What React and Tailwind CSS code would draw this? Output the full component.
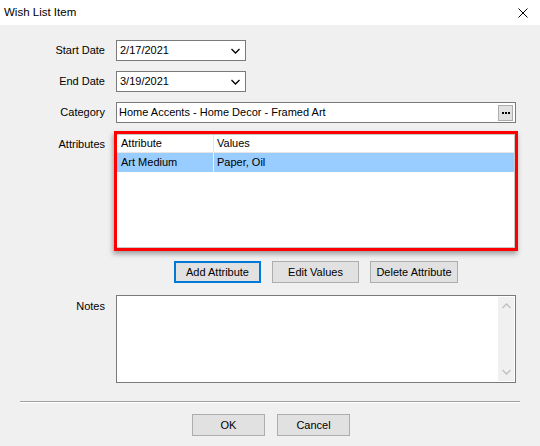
import React from 'react';

const font = { fontFamily: '"Liberation Sans", Arial, sans-serif' };

const Chevron = ({ up, className }) => (
  <svg width="9" height="6" viewBox="0 0 9 6" className={className}>
    <path d={up ? 'M0.5 5 L4.5 1 L8.5 5' : 'M0.5 1 L4.5 5 L8.5 1'} fill="none" stroke="currentColor" strokeWidth="1.3" />
  </svg>
);

const DateField = ({ value }) => (
  <div className="w-[130px] h-[21px] bg-white border border-[#7a7a7a] flex items-center justify-between pl-[3px] pr-[5px]">
    <span>{value}</span>
    <Chevron className="text-black" />
  </div>
);

const Btn = ({ children, focused, w }) => (
  <div
    className={`h-[22px] flex items-center justify-center whitespace-nowrap bg-[#e1e1e1] ${w} ${
      focused ? 'border-2 border-[#0078d7]' : 'border border-[#adadad]'
    }`}
  >
    {children}
  </div>
);

export default function App() {
  return (
    <div className="w-[540px] h-[446px] bg-[#f0f0f0] text-[11px] text-black leading-none overflow-hidden" style={font}>
      {/* title bar */}
      <div className="h-[25px] bg-white flex items-center justify-between pl-[4px] pr-[12px]">
        <span className="text-[11.5px]">Wish List Item</span>
        <svg width="10" height="10" viewBox="0 0 10 10">
          <path d="M0.5 0.5 L9.5 9.5 M9.5 0.5 L0.5 9.5" stroke="#000" strokeWidth="1" />
        </svg>
      </div>

      <div className="grid grid-cols-[105px_1fr] gap-x-[11px] pt-[15px]">
        <div className="h-[21px] flex items-center justify-end">Start Date</div>
        <DateField value="2/17/2021" />

        <div className="h-[21px] mt-[10px] flex items-center justify-end">End Date</div>
        <div className="mt-[10px]">
          <DateField value="3/19/2021" />
        </div>

        <div className="h-[21px] mt-[10px] flex items-center justify-end">Category</div>
        <div className="mt-[10px] w-[400px] h-[21px] bg-white border border-[#7a7a7a] flex items-center justify-between pl-[2px] pr-[2px]">
          <span>Home Accents - Home Decor - Framed Art</span>
          <div className="w-[15px] h-[16px] bg-[#e1e1e1] border border-[#adadad] flex items-center justify-center gap-[1px]">
            <span className="w-[2px] h-[2px] bg-black" />
            <span className="w-[2px] h-[2px] bg-black" />
            <span className="w-[2px] h-[2px] bg-black" />
          </div>
        </div>

        <div className="mt-[8px] pt-[8px] text-right">Attributes</div>
        <div className="mt-[8px] -ml-[2px]">
          <div className="w-[404px] h-[120px] border-[3px] border-[#ff0000] shadow-[-1px_3px_5px_rgba(0,0,0,0.35)] bg-white">
            <div className="h-full border border-[#c8c8c8] border-l-0">
              <div className="h-[18px] flex border-b border-[#e5e5e5]">
                <div className="w-[97px] border-r border-[#e5e5e5] flex items-center pl-[4px]">Attribute</div>
                <div className="flex items-center pl-[3px]">Values</div>
              </div>
              <div className="h-[19px] flex bg-[#99ccff]">
                <div className="w-[97px] border-r border-[#e5f1fb] flex items-center pl-[4px]">Art Medium</div>
                <div className="flex items-center pl-[3px]">Paper, Oil</div>
              </div>
            </div>
          </div>
        </div>

        <div />
        <div className="mt-[10px] pl-[58px] flex gap-[11px]">
          <Btn focused w="w-[87px]">Add Attribute</Btn>
          <Btn w="w-[87px]">Edit Values</Btn>
          <Btn w="w-[88px]">Delete Attribute</Btn>
        </div>

        <div className="mt-[12px] pt-[6px] text-right">Notes</div>
        <div className="mt-[12px] w-[400px] h-[88px] bg-white border border-[#7a7a7a] flex justify-end p-[1px]">
          <div className="w-[16px] h-full bg-[#f0f0f0] flex flex-col items-center justify-between py-[6px] text-[#c0c0c0]">
            <Chevron up />
            <Chevron />
          </div>
        </div>
      </div>

      <div className="mx-[20px] mt-[18px] h-[2px] border-t border-[#a0a0a0] border-b border-b-white" />

      <div className="mt-[11px] flex justify-center gap-[12px] pl-[2px]">
        <Btn w="w-[73px]">OK</Btn>
        <Btn w="w-[73px]">Cancel</Btn>
      </div>
    </div>
  );
}
